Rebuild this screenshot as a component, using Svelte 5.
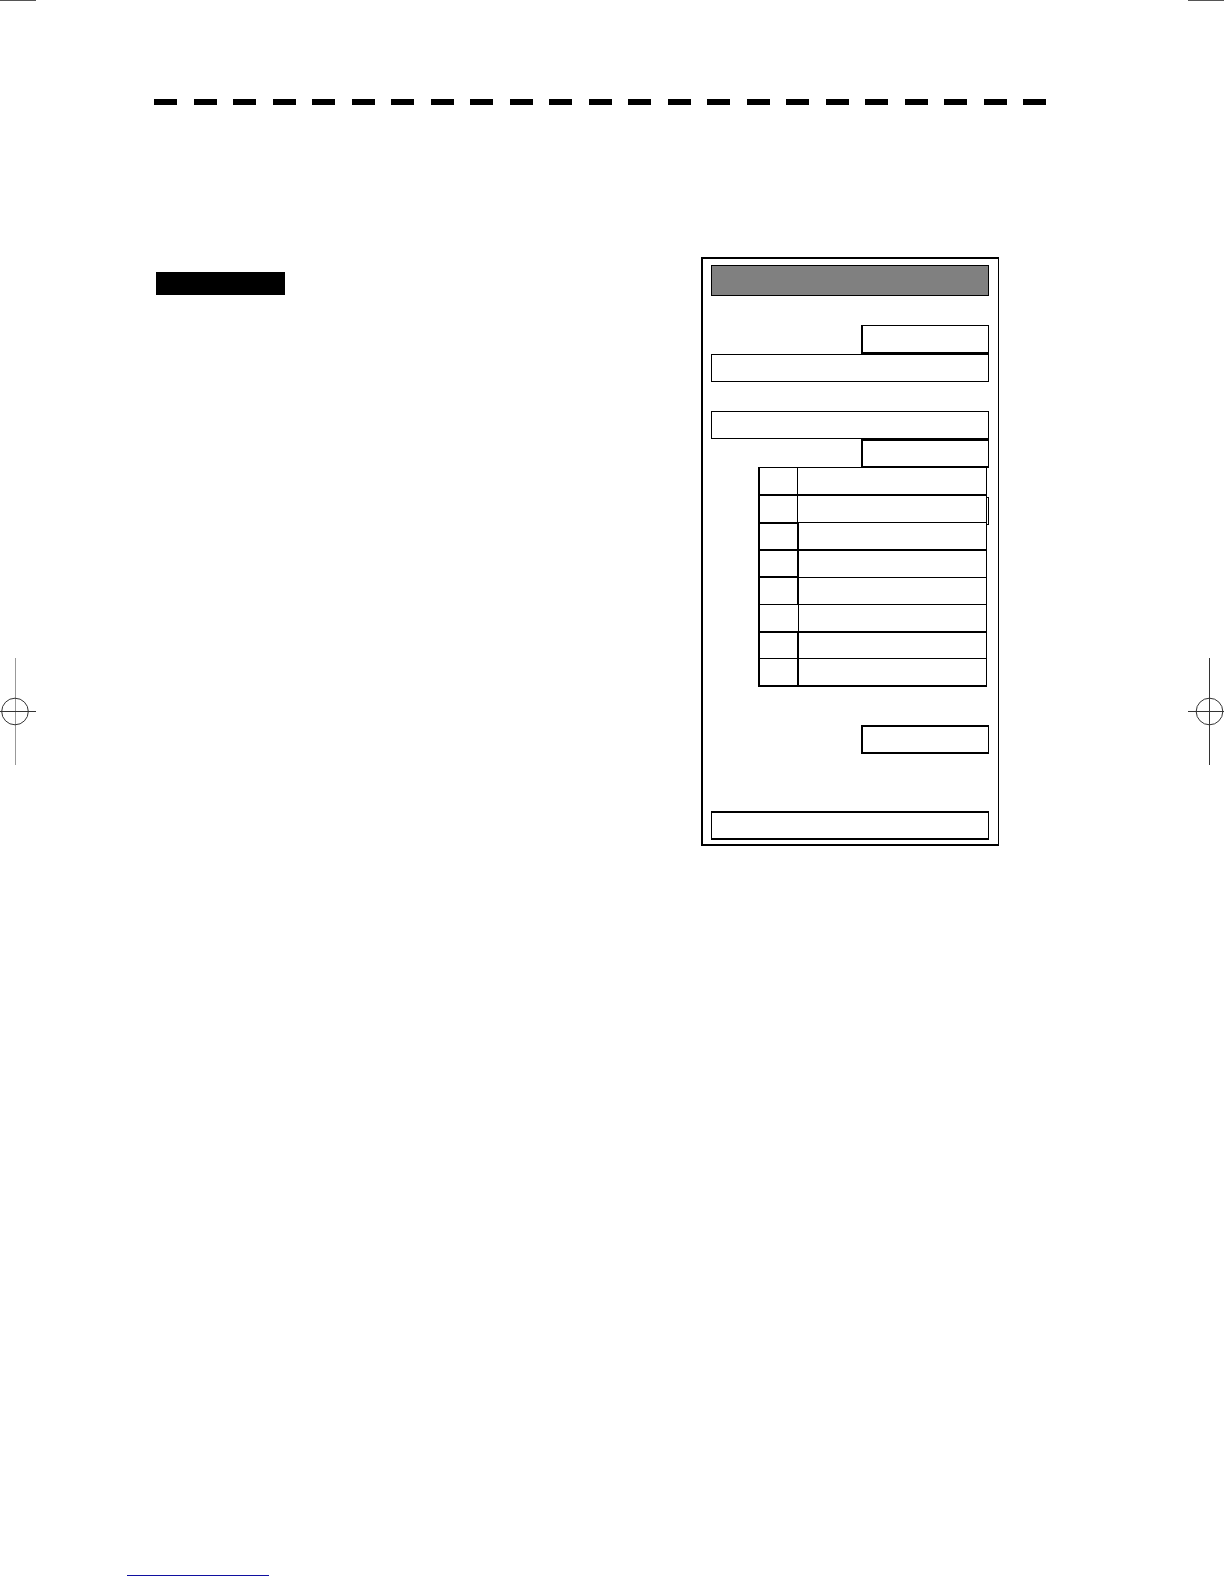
<script>
  const dashes = Array.from({ length: 23 });

  // line weights differ from row to row
  const rows = [
    { height: 27, key: "t1 r1", value: "t1" },
    { height: 28, key: "t2 r1", value: "t2" },
    { height: 27, key: "t2 r1", value: "t1 l1" },
    { height: 28, key: "t2 r1 b1", value: "t2 l1" },
    { height: 27, key: "t1 r1", value: "t1 l1" },
    { height: 27, key: "t1", value: "t1 l1" },
    { height: 27, key: "t2 r1", value: "t2 l1" },
    { height: 29, key: "t1 r1 b2", value: "t1 l1 b2" },
  ];
</script>

{#snippet target(side)}
  <svg class="target {side}" viewBox="0 0 36 108" aria-hidden="true">
    <path class="upright" d={side === "left" ? "M15.5 0V107" : "M21.5 0V107"} />
    <path d="M0 53.5H36" />
    <circle cx={side === "left" ? 15 : 21.5} cy="53.5" r="13.3" />
  </svg>
{/snippet}

<div class="sheet">
  <div class="crop-marks">
    <span></span>
    <span></span>
  </div>

  <div class="body">
    {@render target("left")}

    <main>
      <div class="dashes">
        {#each dashes as _}
          <span></span>
        {/each}
      </div>

      <div class="content">
        <div class="label"></div>

        <section class="panel">
          <div class="title"></div>
          <div class="box short first"></div>
          <div class="box"></div>
          <div class="box second"></div>
          <div class="box short heavy"></div>

          <div class="list">
            <div class="behind"></div>
            <table>
              <tbody>
                {#each rows as row}
                  <tr style="height: {row.height}px">
                    <td class="key {row.key}"></td>
                    <td class="value {row.value}"></td>
                  </tr>
                {/each}
              </tbody>
            </table>
          </div>

          <div class="box short heavy third"></div>
          <div class="box heavy last"></div>
        </section>
      </div>
    </main>

    {@render target("right")}
  </div>

  <footer>
    <a href="#top" aria-label="Back to top"></a>
  </footer>
</div>

<style>
  :global(body) {
    margin: 0;
    background-color: #fff;
  }

  .sheet,
  .sheet * {
    box-sizing: border-box;
  }

  .sheet {
    display: flex;
    flex-direction: column;
    min-height: 100vh;
    font-family: "Liberation Sans", sans-serif;
  }

  .crop-marks {
    display: flex;
    justify-content: space-between;
  }

  .crop-marks span {
    width: 36px;
    height: 1px;
    background-color: #555;
  }

  .body {
    display: flex;
    align-items: flex-start;
  }

  .target {
    flex: none;
    width: 36px;
    height: 108px;
    margin-top: 657px;
    fill: none;
    stroke: #333;
    stroke-width: 1;
  }

  .target.left .upright {
    stroke: #999;
  }

  main {
    flex: 1;
    min-width: 0;
    padding-top: 98px;
  }

  .dashes {
    display: flex;
    justify-content: space-between;
    margin: 0 142px 0 118px;
  }

  .dashes span {
    width: 23px;
    height: 6px;
    background-color: #000;
  }

  .content {
    display: flex;
    justify-content: space-between;
    align-items: flex-start;
    margin: 152px 189px 0 120px;
  }

  .label {
    width: 129px;
    height: 23px;
    margin-top: 15px;
    background-color: #000;
  }

  .panel {
    flex: 0 1 298px;
    padding: 6px 9px 4px 8px;
    border: 2px solid #000;
    border-right-width: 1px;
  }

  .title {
    height: 31px;
    border: 1px solid #000;
    background-color: #808080;
  }

  .box {
    height: 28px;
    border: 1px solid #000;
  }

  .short {
    width: 128px;
    height: 29px;
    margin-left: auto;
    border-left-width: 2px;
    border-bottom-width: 2px;
  }

  .heavy {
    height: 29px;
    border-top-width: 2px;
    border-bottom-width: 2px;
  }

  .first,
  .second {
    margin-top: 29px;
  }

  .third {
    margin-top: 38px;
  }

  .last {
    margin-top: 57px;
  }

  .list {
    position: relative;
    margin: -1px 2px 0 47px;
  }

  /* box that shows past the right edge of the list */
  .behind {
    position: absolute;
    top: 30px;
    right: -2px;
    width: 128px;
    height: 28px;
    border: 1px solid #000;
  }

  table {
    position: relative;
    width: 100%;
    table-layout: fixed;
    border-collapse: separate;
    border-spacing: 0;
    background-color: #fff;
  }

  td {
    padding: 0;
    border: 0 solid #000;
  }

  .key {
    width: 40px;
    border-left-width: 2px;
  }

  .value {
    border-right-width: 1px;
  }

  .t1 {
    border-top-width: 1px;
  }

  .t2 {
    border-top-width: 2px;
  }

  .r1 {
    border-right-width: 1px;
  }

  .l1 {
    border-left-width: 1px;
  }

  .b1 {
    border-bottom-width: 1px;
  }

  .b2 {
    border-bottom-width: 2px;
  }

  footer {
    margin-top: auto;
    padding: 0 0 8px 127px;
  }

  footer a {
    display: block;
    width: 142px;
    height: 1px;
    background-color: #1010a0;
  }
</style>
